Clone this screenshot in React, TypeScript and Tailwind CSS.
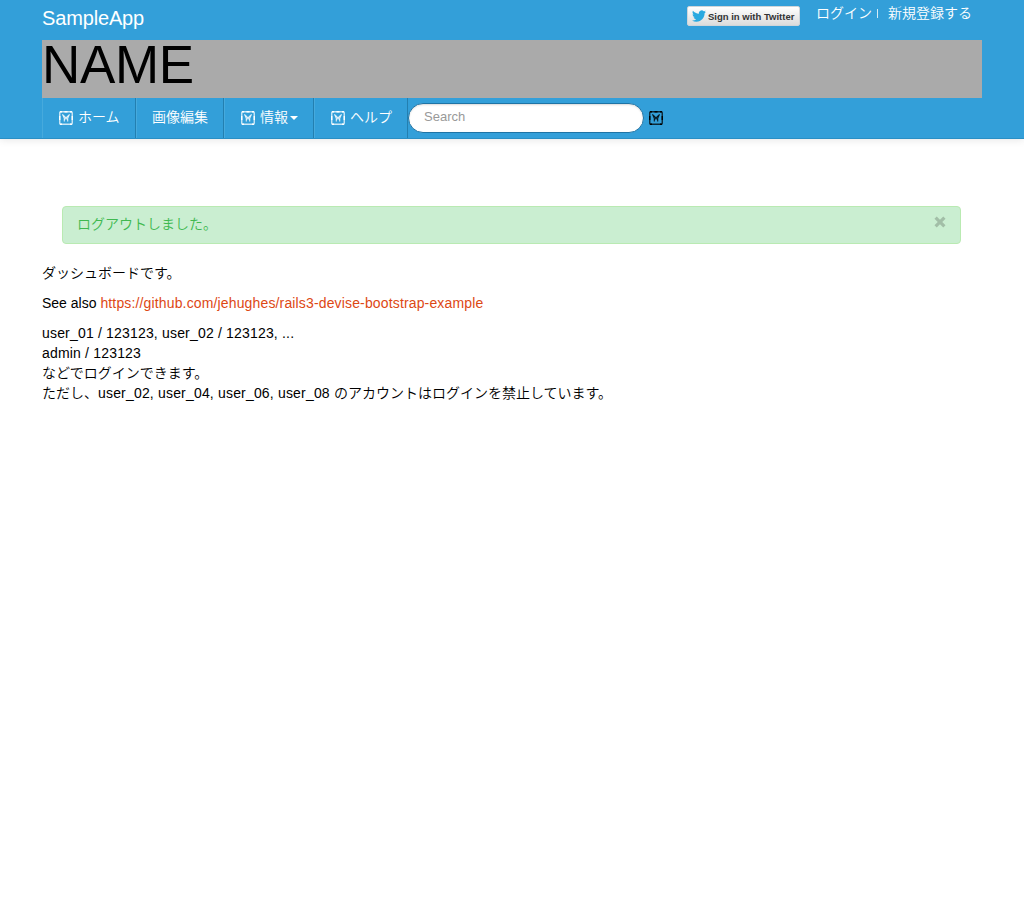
import React from "react";

function MissingIcon({ className = "" }: { className?: string }) {
  return (
    <svg viewBox="0 0 14 14" className={`h-[14px] w-[14px] shrink-0 ${className}`} fill="none" stroke="currentColor">
      <rect x="0.75" y="0.75" width="12.5" height="12.5" rx="1" strokeWidth="1.4" strokeOpacity="0.75" />
      <path d="M1 .7h2M5.5 .7h3M11 .7h2M1 13.3h2M11 13.3h2M.7 5v4M13.3 5v4" strokeWidth="1.4" />
      <path d="M3.5 3.2l1.8 4v3.4M10.5 3.2L8.7 7.2v3.4M4.2 4.2L7 7l2.8-2.8M5.3 9L7 7l1.7 2" strokeWidth="1.1" strokeOpacity="0.85" />
    </svg>
  );
}

function NavItem({ children, width }: { children: React.ReactNode; width: string }) {
  return (
    <li className={`flex h-10 items-center border-l border-l-[#46aadd] border-r border-r-[#237fb0] pl-[15px] pb-[3px] ${width}`}>
      <a href="#" className="flex items-center whitespace-nowrap">{children}</a>
    </li>
  );
}

export default function App() {
  return (
    <div className="min-h-[914px] bg-white font-['Liberation_Sans','Noto_Sans_CJK_JP',sans-serif] text-sm leading-5 font-[350] text-black">
      <header className="h-[139px] border-b border-[#2a8fc5] bg-[#339fd9] text-white shadow-[0_1px_8px_rgba(0,0,0,0.1)]">
        <div className="mx-auto w-[940px]">
          <div className="flex h-10 items-start justify-between">
            <a href="#" className="pt-2 text-[20px] leading-5 tracking-[-0.15px]">SampleApp</a>
            <div className="flex items-start pr-[10px]">
              <button className="mt-[6px] mr-4 flex h-5 w-[113px] items-center rounded-[2px] border border-[#d0d5d9] bg-gradient-to-b from-white to-[#dcdcdc] pl-1">
                <svg viewBox="0 0 24 24" className="mr-[2px] h-[14px] w-[14px] shrink-0 fill-[#2aa9e0]">
                  <path d="M23.95 4.57a10 10 0 0 1-2.82.77 4.96 4.96 0 0 0 2.16-2.72c-.95.55-2 .95-3.13 1.18a4.92 4.92 0 0 0-8.38 4.48C7.69 8.09 4.07 6.13 1.64 3.16a4.82 4.82 0 0 0-.67 2.48c0 1.71.87 3.21 2.19 4.1a4.9 4.9 0 0 1-2.23-.62v.06a4.92 4.92 0 0 0 3.95 4.83 5 5 0 0 1-2.21.08 4.94 4.94 0 0 0 4.6 3.42A9.87 9.87 0 0 1 0 19.54a13.99 13.99 0 0 0 7.56 2.21c9.05 0 14-7.5 14-13.98 0-.21 0-.42-.02-.63a9.94 9.94 0 0 0 2.41-2.57z" />
                </svg>
                <span className="pt-px whitespace-nowrap text-[9.5px] leading-3 font-bold text-[#333]">Sign in with Twitter</span>
              </button>
              <div className="flex pt-1">
                <a href="#" className="-mt-px">ログイン</a>
                <span className="mt-[5px] ml-[5px] mr-[10px] h-[9px] w-px bg-white/80" />
                <a href="#" className="-mt-px">新規登録する</a>
              </div>
            </div>
          </div>
          <div className="h-[58px] bg-[#aaa] text-[53px] leading-[50px] tracking-[-0.3px] text-black">NAME</div>
          <div className="flex h-10">
            <ul className="flex">
              <NavItem width="w-[94px]"><MissingIcon className="relative top-px ml-px mr-[5px]" />ホーム</NavItem>
              <NavItem width="w-[88px]">画像編集</NavItem>
              <NavItem width="w-[90px]"><MissingIcon className="relative top-px ml-px mr-[5px]" />情報<svg viewBox="0 0 8 4" className="relative top-px ml-[2px] h-1 w-2 fill-white"><path d="M0 0h8L4 4z" /></svg></NavItem>
              <NavItem width="w-[94px]"><MissingIcon className="relative top-px ml-px mr-[5px]" />ヘルプ</NavItem>
            </ul>
            <form className="flex items-start pt-[5px]">
              <input placeholder="Search" className="h-[30px] w-[236px] rounded-[15px] border border-[#1f74a5] bg-white px-[15px] pb-[3px] text-[13px] leading-5 text-[#555] shadow-[inset_0_1px_2px_rgba(0,0,0,0.15)] outline-none placeholder:text-[#999]" />
              <MissingIcon className="mt-2 ml-[5px] text-black" />
            </form>
          </div>
        </div>
      </header>
      <main className="mx-auto w-[940px] pt-[67px]">
        <div className="mx-5 mr-[21px] flex h-[38px] items-start justify-between rounded-[4px] border border-[#b9eab2] bg-[#caeed1] pt-[7px] pr-[14px] pl-[14px] text-[#3fb950]">
          <span>ログアウトしました。</span>
          <button aria-label="close" className="mt-[2px] text-[#a2bea7]">
            <svg viewBox="0 0 12 12" className="h-3 w-3" fill="none" stroke="currentColor" strokeWidth="3.2"><path d="M1.6 1.6l8.8 8.8M10.4 1.6l-8.8 8.8" /></svg>
          </button>
        </div>
        <p className="mt-[19px]">ダッシュボードです。</p>
        <p className="mt-[10px]">See also <a href="#" className="tracking-[0.147px] text-[#dd4814]">https://github.com/jehughes/rails3-devise-bootstrap-example</a></p>
        <p className="mt-[10px]"><span className="tracking-[0.18px]">user_01 / 123123, user_02 / 123123, ...<br />admin / 123123</span><br />などでログインできます。<br />ただし、<span className="tracking-[0.18px]">user_02, user_04, user_06, user_08 </span>のアカウントはログインを禁止しています。</p>
      </main>
    </div>
  );
}
